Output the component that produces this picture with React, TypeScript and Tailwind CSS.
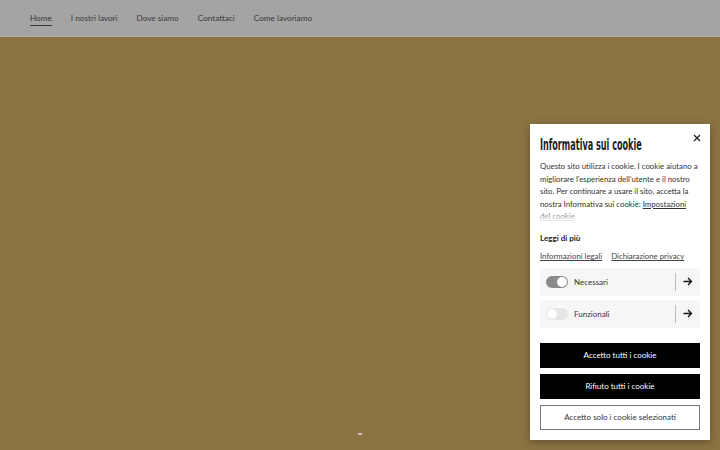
import React from 'react';

const navItems = ['Home', 'I nostri lavori', 'Dove siamo', 'Contattaci', 'Come lavoriamo'];

const Toggle = ({ on }: { on: boolean }) => (
  <div
    className={
      'relative h-[12px] w-[22px] rounded-full ' + (on ? 'bg-[#8a8a8a]' : 'bg-[#e6e6e6]')
    }
  >
    <div
      className={
        'absolute top-[1px] h-[10px] w-[10px] rounded-full bg-white ' + (on ? 'right-[1px]' : 'left-[1px]')
      }
    />
  </div>
);

const Arrow = () => (
  <svg width="10" height="9" viewBox="0 0 10 9" fill="none">
    <path d="M0.5 4.5H8.5M5 1L8.5 4.5L5 8" stroke="#111" strokeWidth="1.4" />
  </svg>
);

const CategoryRow = ({ label, on }: { label: string; on: boolean }) => (
  <div className="flex h-[28px] items-center bg-[#f6f6f6] pl-[6px]">
    <Toggle on={on} />
    <span className="ml-[6px] flex-1 text-[8px] text-[#333]">{label}</span>
    <div className="h-[18px] w-px bg-[#bbb]" />
    <div className="flex w-[24px] justify-center">
      <Arrow />
    </div>
  </div>
);

export default function App() {
  return (
    <div
      className="relative flex h-[450px] w-[720px] flex-col overflow-hidden bg-[#8b7342]"
      style={{ fontFamily: 'Lato, "Open Sans", sans-serif' }}
    >
      <header className="flex h-[37px] items-center gap-[19px] border-b border-[#b4a8a8] bg-[#a4a4a4] pl-[30px]">
        {navItems.map((item, i) => (
          <span
            key={item}
            className={
              'text-[8.2px] text-[#383838] ' + (i === 0 ? 'border-b border-[#383838] pb-[1px] mt-[2px]' : '')
            }
          >
            {item}
          </span>
        ))}
      </header>

      <div className="flex-1" />
      <div className="flex justify-center pb-[14px]">
        <div className="h-0 w-0 border-x-[3.5px] border-t-[3.5px] border-x-transparent border-t-[#c9c2b0]" />
      </div>

      <div className="absolute left-[530px] top-[124px] w-[180px] bg-white px-[10px] pb-[10px] pt-[8px] shadow-[0_2px_8px_rgba(0,0,0,0.3)]">
        <div className="relative h-[20px]">
          <h2
            className="inline-block origin-left scale-x-[0.6] whitespace-nowrap text-[15px] font-bold leading-[18px] text-[#222]"
            style={{ fontFamily: '"DejaVu Sans Condensed", "DejaVu Sans", sans-serif' }}
          >
            Informativa sui cookie
          </h2>
          <svg width="8" height="8" viewBox="0 0 8 8" className="absolute -right-[1px] top-[2px]">
            <path d="M1 1L7 7M7 1L1 7" stroke="#222" strokeWidth="1.3" />
          </svg>
        </div>

        <div className="relative mt-[8px] h-[62px] overflow-hidden">
          <p className="text-[7.8px] leading-[12.6px] text-[#333]">
            Questo sito utilizza i cookie. I cookie aiutano a migliorare l'esperienza dell'utente e il nostro sito. Per
            continuare a usare il sito, accetta la nostra Informativa sui cookie:{' '}
            <span className="underline">Impostazioni</span>
            <br />
            <span className="underline">del cookie</span>
          </p>
          <div className="absolute bottom-0 left-0 right-0 h-[12px] bg-gradient-to-b from-white/0 to-white" />
        </div>

        <div className="mt-[10px] text-[8px] font-bold text-[#222]">Leggi di più</div>
        <div className="mt-[7px] flex gap-[9px] text-[7.8px] text-[#444]">
          <span className="underline">Informazioni legali</span>
          <span className="underline">Dichiarazione privacy</span>
        </div>

        <div className="mt-[5px] flex flex-col gap-[4px]">
          <CategoryRow label="Necessari" on />
          <CategoryRow label="Funzionali" on={false} />
        </div>

        <div className="mt-[15px] flex flex-col gap-[6px] text-[8px]">
          <button className="h-[25px] bg-black text-white">Accetto tutti i cookie</button>
          <button className="h-[25px] bg-black text-white">Rifiuto tutti i cookie</button>
          <button className="h-[25px] border border-[#777] bg-white text-[#333]">
            Accetto solo i cookie selezionati
          </button>
        </div>
      </div>
    </div>
  );
}
